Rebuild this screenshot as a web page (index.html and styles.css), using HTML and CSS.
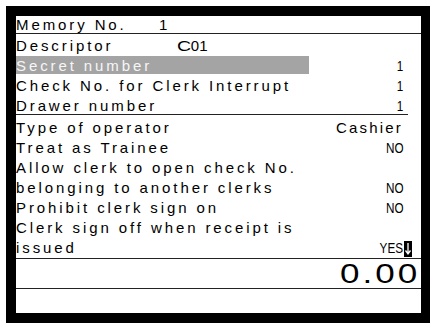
FILE: index.html
```html
<!DOCTYPE html>
<html>
<head>
<meta charset="utf-8">
<link rel="stylesheet" href="styles.css">
</head>
<body>
<div class="screen">
  <div class="memory"><span class="lbl w143">Memory No.</span><span>1</span></div>
  <div class="sec1">
    <div class="row start"><span class="lbl w161">Descriptor</span><span class="desc"><span class="bigc">C</span>01</span></div>
    <div class="row"><span class="lbl hl">Secret number</span><span class="val">1</span></div>
    <div class="row"><span class="lbl">Check No. for Clerk Interrupt</span><span class="val">1</span></div>
    <div class="row short"><span class="lbl">Drawer number</span><span class="val">1</span></div>
  </div>
  <div class="sec2">
    <div class="row"><span class="lbl">Type of operator</span><span class="lbl word">Cashier</span></div>
    <div class="row"><span class="lbl">Treat as Trainee</span><span class="val">NO</span></div>
    <div class="row"><span class="lbl">Allow clerk to open check No.</span></div>
    <div class="row"><span class="lbl">belonging to another clerks</span><span class="val">NO</span></div>
    <div class="row"><span class="lbl">Prohibit clerk sign on</span><span class="val">NO</span></div>
    <div class="row"><span class="lbl">Clerk sign off when receipt is</span></div>
    <div class="row"><span class="lbl">issued</span><span class="last"><span class="val">YES</span><svg class="cursor" width="8" height="16" viewBox="0 0 8 16"><rect width="8" height="16" fill="#000"/><path d="M4 2V12M1.5 9.5L4 13L6.5 9.5" stroke="#fff" stroke-width="1.3" fill="none"/></svg></span></div>
  </div>
  <div class="total"><span class="amount">0.00</span></div>
  <div class="blank"></div>
</div>
</body>
</html>
```
FILE: styles.css
```css
body {
  margin: 0;
  background: #fff;
  font-family: "Liberation Sans", Arial, sans-serif;
  font-size: 15px;
  color: #000;
}
.screen {
  margin: 6px 0 0 6px;
  width: 405px;
  height: 297px;
  border: 10px solid #000;
  border-right-width: 9px;
  display: flex;
  flex-direction: column;
  background: #fff;
}
.memory {
  flex: none;
  display: flex;
  height: 17px;
  line-height: 18px;
  border-bottom: 1px solid #222;
  white-space: nowrap;
}
.lbl {
  letter-spacing: 2.9px;
  white-space: pre;
}
.w143 { width: 143px; flex: none; }
.w161 { width: 161px; flex: none; }
.sec1 {
  flex: none;
  height: 78px;
  padding: 2px 5px 0 0;
  margin-right: 13px;
  border-bottom: 1px solid #222;
}
.sec2 {
  flex: none;
  height: 140px;
  padding: 3px 18px 0 0;
  border-bottom: 1px solid #222;
}
.row {
  display: flex;
  justify-content: space-between;
  align-items: flex-start;
  height: 20px;
  line-height: 20px;
  white-space: nowrap;
}
.row.start { justify-content: flex-start; }
.row.short { height: 18px; }
.hl {
  display: block;
  width: 293px;
  height: 18px;
  background: #a4a4a4;
  color: #f6f6f6;
}
.val {
  display: inline-block;
  transform: scaleX(0.78);
  transform-origin: right center;
}
.word { letter-spacing: 2.2px; }
.desc { white-space: nowrap; }
.bigc {
  display: inline-block;
  transform: scale(1.3, 0.92);
  transform-origin: left bottom;
  margin-right: 3px;
}
.last { display: inline-flex; align-items: baseline; }
.cursor {
  margin-left: 1px;
  margin-right: -9px;
  align-self: flex-end;
  margin-bottom: 1px;
}
.total {
  flex: none;
  height: 29px;
  line-height: 29px;
  font-size: 28px;
  text-align: right;
  padding-right: 1px;
  border-bottom: 1px solid #222;
  white-space: nowrap;
}
.amount {
  display: inline-block;
  letter-spacing: 2.4px;
  transform: scaleX(1.25);
  transform-origin: right center;
}
.blank { flex: 1; }
```
